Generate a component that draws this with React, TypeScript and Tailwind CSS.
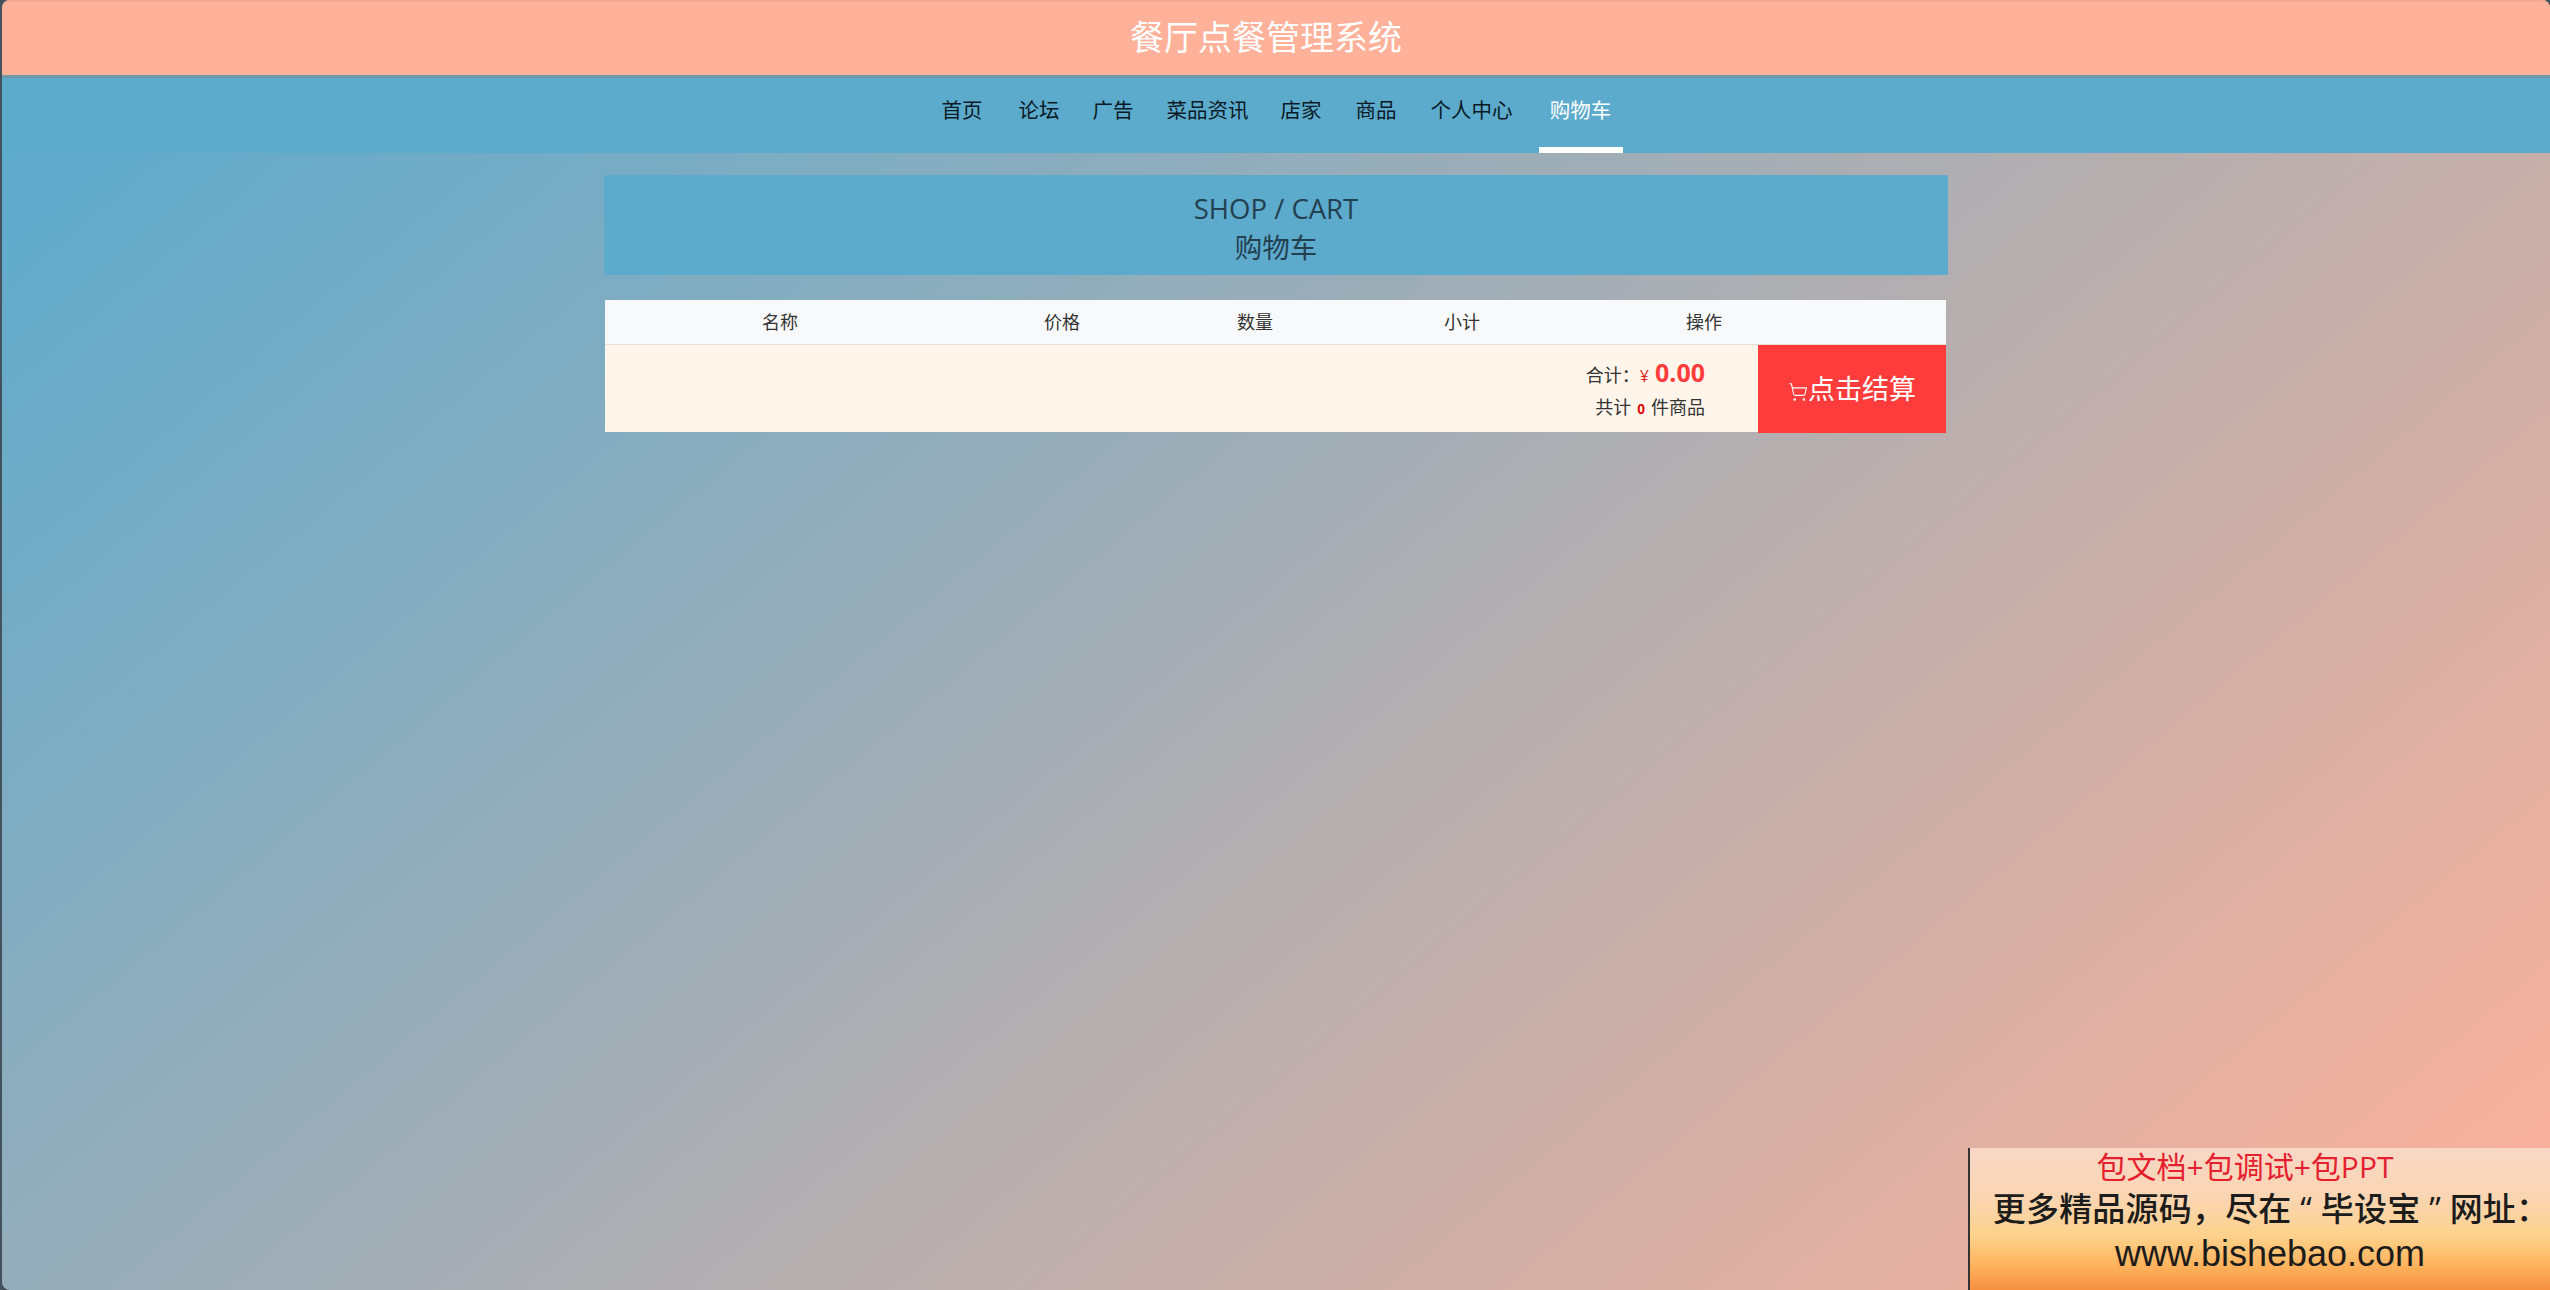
import React from 'react';
import { ShoppingCart } from 'lucide-react';

const navItems = [
  { label: '首页', className: 'ml-0' },
  { label: '论坛', className: 'ml-[36px]' },
  { label: '广告', className: 'ml-[33px]' },
  { label: '菜品资讯', className: 'ml-[33px]' },
  { label: '店家', className: 'ml-[32px]' },
  { label: '商品', className: 'ml-[34px]' },
  { label: '个人中心', className: 'ml-[34px]' },
];

const columns = ['名称', '价格', '数量', '小计', '操作', ''];

const fontStack = "font-['Open_Sans','Noto_Sans_CJK_SC',sans-serif]";

export default function App() {
  return (
    <div className={`relative h-[1290px] w-full overflow-hidden bg-[#44525e] pl-[2px] ${fontStack}`}>
      <div className="flex h-full flex-col overflow-hidden rounded-[8px] bg-[linear-gradient(140deg,#5cabcd_0%,#60abcc_6%,#adaeb2_52%,#ffb199_100%)]">
        <header className="flex h-[75px] shrink-0 items-center justify-center border-t-2 border-[#f5a78e] bg-[#ffb199] text-[34px] text-white">
          <span className="-mt-[3px] mr-[20px]">餐厅点餐管理系统</span>
        </header>

        <nav className="flex h-[78px] shrink-0 items-start justify-center border-t-[3px] border-[#6f98a9] bg-[#5cabcd] pl-[12px] text-[20.5px] text-[#0b1a24]">
          {navItems.map((item) => (
            <a key={item.label} className={`mt-[17px] leading-[30px] ${item.className}`}>
              {item.label}
            </a>
          ))}
          <a className="ml-[26px] flex h-full w-[84px] justify-center border-b-[6px] border-white pt-[17px] leading-[30px] text-white">
            购物车
          </a>
        </nav>

        <main className="mx-auto mt-[22px] w-[1344px]">
          <div className="flex h-[100px] flex-col items-center justify-center rounded-[2px] bg-[#5cabcd] pt-[5px] text-[27.5px] leading-[39px] text-[#24404f]">
            <span>SHOP / CART</span>
            <span>购物车</span>
          </div>

          <div className="mt-[25px] ml-[1px] w-[1341px] text-[18px] text-[#333]">
            <div className="grid h-[45px] grid-cols-[350px_214px_172px_242px_242px_121px] items-center border-b border-[#eadfd6] bg-[#f8f9fa] text-center">
              {columns.map((name) => (
                <span key={name || 'empty'}>{name}</span>
              ))}
            </div>

            <div className="flex h-[87px] items-stretch justify-end bg-[#fff5ea]">
              <div className="mr-[53px] flex flex-col items-end justify-center">
                <div className="flex h-[36px] items-baseline">
                  <span>合计：</span>
                  <span className="text-[16px] text-[#e02020]">¥</span>
                  <span className="ml-[6px] text-[25px] font-bold text-[#ff3c3c]">0.00</span>
                </div>
                <div className="mt-[4px] flex h-[30px] items-baseline">
                  <span>共计</span>
                  <span className="mx-[6px] font-['Liberation_Sans',sans-serif] text-[14px] font-bold text-[#e00000]">0</span>
                  <span>件商品</span>
                </div>
              </div>
              <button className="flex h-[88px] w-[188px] items-center justify-center bg-[#ff3c3c] text-[27px] text-white">
                <ShoppingCart className="mt-[6px] h-[20px] w-[20px]" strokeWidth={1.25} />
                <span>点击结算</span>
              </button>
            </div>
          </div>
        </main>
      </div>

      {/* 右下角广告图 */}
      <div className="absolute right-0 bottom-0 flex h-[142px] w-[582px] flex-col items-center border-l-2 border-[#333] bg-[linear-gradient(180deg,#f8d8c6_0%,#fad5b2_35%,#fdd28b_62%,#ffb45e_82%,#f58f40_100%)] text-[#1c1c1c]">
        <div className="-mt-[1px] mr-[30px] text-[30px] leading-[40px] text-[#e5202e]">包文档+包调试+包PPT</div>
        <div className="ml-[22px] text-[33px] leading-[44px] font-medium tracking-[0.2px] whitespace-pre">更多精品源码，尽在 “ 毕设宝 ” 网址：</div>
        <div className="mt-[1px] ml-[20px] font-['Liberation_Sans',sans-serif] text-[36px] leading-[44px]">www.bishebao.com</div>
      </div>
    </div>
  );
}
